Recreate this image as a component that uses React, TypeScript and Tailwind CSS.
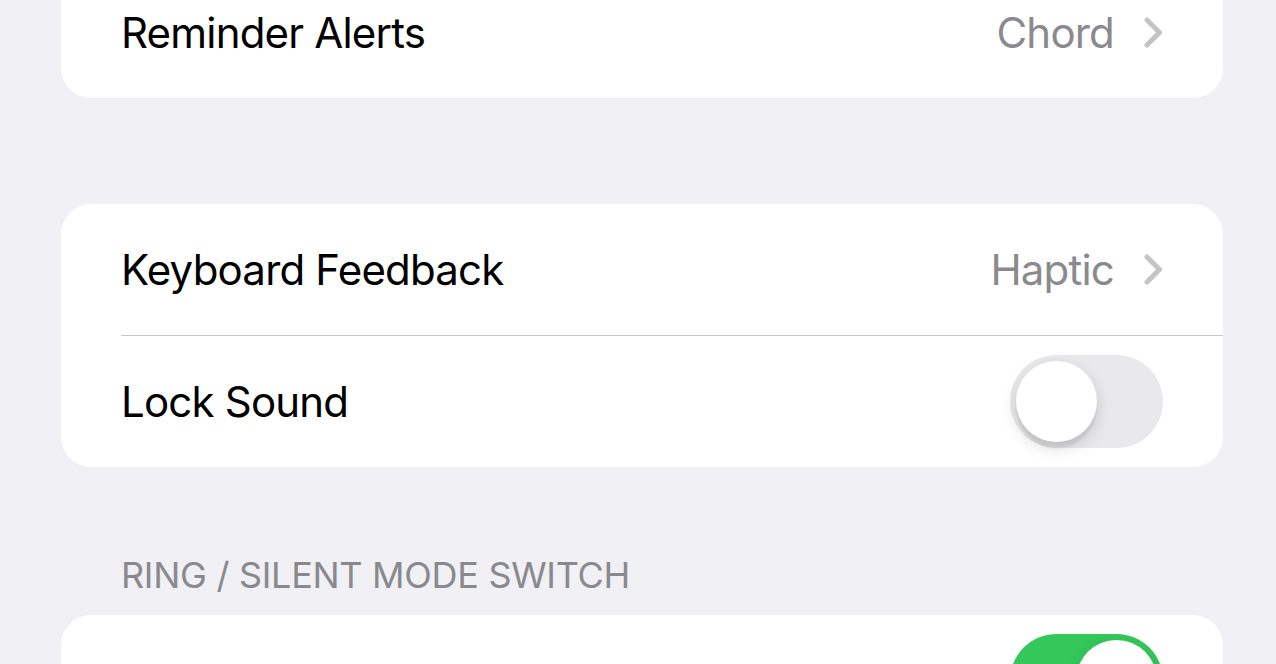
import React from 'react';

function Chevron() {
  return (
    <svg width="19" height="31" viewBox="0 0 19 31" fill="none" className="ml-[30px]">
      <path d="M3 3 L15.5 15.5 L3 28" stroke="#c4c4c7" strokeWidth="5" strokeLinecap="round" strokeLinejoin="round" />
    </svg>
  );
}

function Toggle({ on }: { on: boolean }) {
  return (
    <div
      className={`relative w-[153px] h-[93px] rounded-full ${on ? 'bg-[#34c759]' : 'bg-[#e9e9eb]'}`}
    >
      <div
        className={`absolute top-[6px] w-[81px] h-[81px] rounded-full bg-white shadow-[0_6px_16px_rgba(0,0,0,0.15),0_6px_2px_rgba(0,0,0,0.06)] ${on ? 'left-[66px]' : 'left-[6px]'}`}
      />
    </div>
  );
}

function Row({ label, value, toggle }: { label?: string; value?: string; toggle?: boolean }) {
  return (
    <div className="flex items-center h-[131px] pl-[60px] pr-[60px]">
      <span className="flex-1 text-black">{label}</span>
      {value !== undefined && (
        <>
          <span className="text-[#8a8a8e]">{value}</span>
          <Chevron />
        </>
      )}
      {toggle !== undefined && <Toggle on={toggle} />}
    </div>
  );
}

export default function App() {
  return (
    <div
      className="w-[1276px] h-[664px] overflow-hidden bg-[#f0f0f5] text-[42px] tracking-[-0.8px]"
      style={{ fontFamily: 'Inter, "Noto Sans", sans-serif' }}
    >
      <div className="ml-[61px] w-[1162px] -mt-[33px]">
        <div className="bg-white rounded-[30px] overflow-hidden">
          <Row label="Reminder Alerts" value="Chord" />
        </div>

        <div className="bg-white rounded-[30px] overflow-hidden mt-[106px]">
          <Row label="Keyboard Feedback" value="Haptic" />
          <div className="ml-[60px] h-px bg-[#c8c8cc]" />
          <Row label="Lock Sound" toggle={false} />
        </div>

        <div className="mt-[86px] pl-[60px] text-[36px] text-[#8a8a8e] leading-[44px] tracking-[-0.3px]">
          RING / SILENT MODE SWITCH
        </div>

        {/* row label sits below the visible area */}
        <div className="bg-white rounded-[30px] overflow-hidden mt-[18px]">
          <Row toggle={true} />
        </div>
      </div>
    </div>
  );
}
